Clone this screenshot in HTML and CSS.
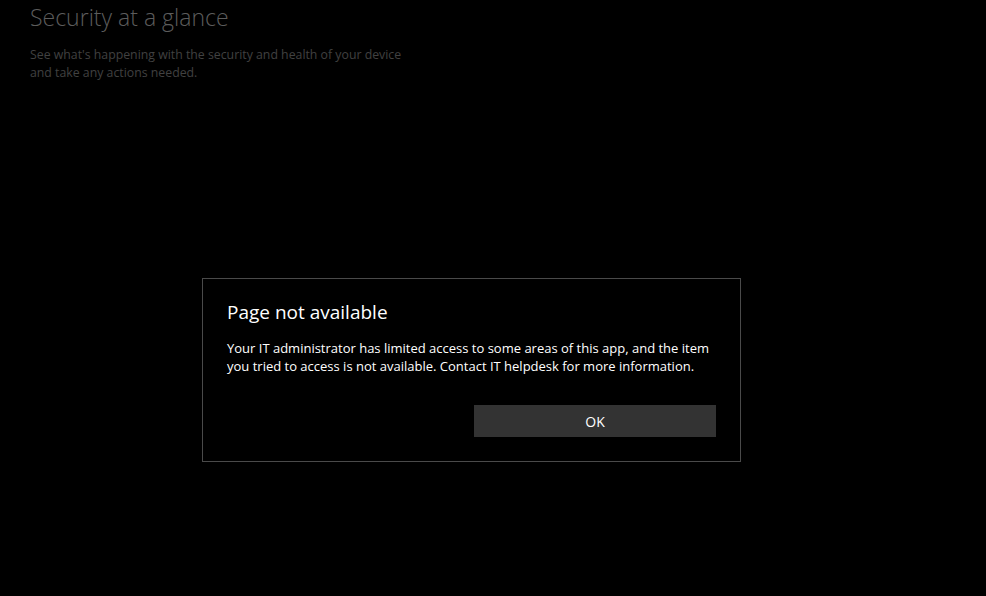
FILE: index.html
```html
<!DOCTYPE html>
<html lang="en">
<head>
    <meta charset="UTF-8">
    <meta name="viewport" content="width=device-width, initial-scale=1.0">
    <title>Windows Security</title>
    <link rel="stylesheet" href="styles.css">
</head>
<body>
    <div class="page">
        <h1 class="page-title">Security at a glance</h1>
        <p class="page-desc">See what's happening with the security and health of your device<br>and take any actions needed.</p>
    </div>

    <div class="overlay">
        <div class="dialog">
            <h2 class="dialog-title">Page not available</h2>
            <p class="dialog-text">Your IT administrator has limited access to some areas of this app, and the item you tried to access is not available. Contact IT helpdesk for more information.</p>
            <div class="dialog-buttons">
                <span></span>
                <button class="btn">OK</button>
            </div>
        </div>
    </div>
</body>
</html>
```

FILE: styles.css
```css
body {
    margin: 0;
    background-color: #000;
    font-family: "Open Sans", "Noto Sans", sans-serif;
    width: 986px;
    height: 596px;
    overflow: hidden;
    position: relative;
}
.page {
    padding: 2px 30px;
}
.page-title {
    margin: 0;
    font-weight: 300;
    font-size: 23px;
    line-height: 30px;
    color: #5c5c5c;
}
.page-desc {
    margin: 14px 0 0;
    font-size: 12.3px;
    line-height: 18px;
    color: #414141;
}
.overlay {
    position: absolute;
    left: 202px;
    top: 278px;
}
.dialog {
    width: 489px;
    padding: 20px 24px 24px;
    border: 1px solid #4a4a4a;
    background-color: #000;
    color: #fff;
}
.dialog-title {
    margin: 0;
    font-weight: 400;
    font-size: 19px;
    line-height: 26px;
}
.dialog-text {
    margin: 14px 0 0;
    font-size: 13px;
    line-height: 18px;
}
.dialog-buttons {
    display: grid;
    grid-template-columns: 1fr 242px;
    gap: 5px;
    margin-top: 30px;
}
.btn {
    height: 32px;
    border: none;
    background-color: #333;
    color: #fff;
    font-family: inherit;
    font-size: 14px;
}
```
